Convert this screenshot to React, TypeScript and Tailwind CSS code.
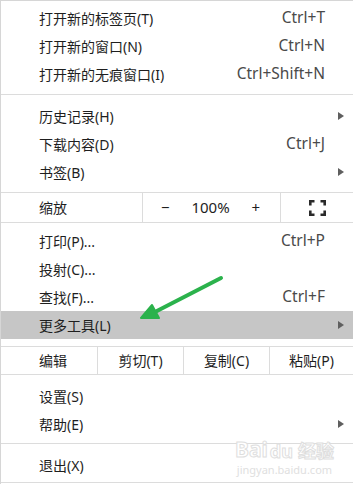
const font = "font-['Noto_Sans','Noto_Sans_CJK_SC',sans-serif]";

const Arrow = () => (
  <svg width="6" height="8" viewBox="0 0 6 8">
    <path d="M0 0 L6 4 L0 8 Z" fill="#5f5f5f" />
  </svg>
);

type ItemProps = {
  label: string;
  shortcut?: string;
  sub?: boolean;
  active?: boolean;
};

const Item = ({ label, shortcut, sub, active }: ItemProps) => (
  <div
    className={`flex items-center h-[28px] pl-[38px] text-[14px] text-[#1e1e1e] ${
      active ? "bg-[#c6c6c6]" : ""
    }`}
  >
    <span className="flex-1">{label}</span>
    {shortcut && <span className="text-[15.5px] text-[#4a4a4a]">{shortcut}</span>}
    <span className="w-[28px] flex items-center pl-[13px]">{sub && <Arrow />}</span>
  </div>
);

const Line = () => <div className="h-px bg-[#dcdcdc]" />;

const Fullscreen = () => (
  <svg width="17" height="16" viewBox="0 0 17 16" fill="none" stroke="#2a2a2a" strokeWidth="2.6">
    <path d="M1.3 5.5 V1.3 H5.5" />
    <path d="M11.5 1.3 H15.7 V5.5" />
    <path d="M15.7 10.5 V14.7 H11.5" />
    <path d="M5.5 14.7 H1.3 V10.5" />
  </svg>
);

export default function App() {
  return (
    <div className={`relative w-[353px] h-[484px] bg-white border-t border-l border-[#d6d6d6] overflow-hidden ${font}`}>
      <div className="pt-[3px] pb-[6px]">
        <Item label="打开新的标签页(T)" shortcut="Ctrl+T" />
        <Item label="打开新的窗口(N)" shortcut="Ctrl+N" />
        <Item label="打开新的无痕窗口(I)" shortcut="Ctrl+Shift+N" />
      </div>
      <Line />
      <div className="pt-[7px] pb-[6px]">
        <Item label="历史记录(H)" sub />
        <Item label="下载内容(D)" shortcut="Ctrl+J" />
        <Item label="书签(B)" sub />
      </div>
      <Line />
      <div className="flex h-[29px] text-[14px] text-[#1e1e1e]">
        <div className="w-[141px] flex items-center pl-[38px]">缩放</div>
        <div className="w-px bg-[#dcdcdc]" />
        <div className="w-[137px] flex items-center justify-between pl-[18px] pr-[20px] text-[15px]">
          <span>−</span>
          <span>100%</span>
          <span>+</span>
        </div>
        <div className="w-px bg-[#dcdcdc]" />
        <div className="flex-1 flex items-center justify-center">
          <Fullscreen />
        </div>
      </div>
      <Line />
      <div className="pt-[4px] pb-[7px]">
        <Item label="打印(P)..." shortcut="Ctrl+P" />
        <Item label="投射(C)..." />
        <Item label="查找(F)..." shortcut="Ctrl+F" />
        <Item label="更多工具(L)" sub active />
      </div>
      <Line />
      <div className="flex h-[27px] text-[14px] text-[#1e1e1e]">
        <div className="w-[96px] flex items-center pl-[38px]">编辑</div>
        <div className="w-px bg-[#dcdcdc]" />
        <div className="w-[85px] flex items-center justify-center">剪切(T)</div>
        <div className="w-px bg-[#dcdcdc]" />
        <div className="w-[85px] flex items-center justify-center">复制(C)</div>
        <div className="w-px bg-[#dcdcdc]" />
        <div className="flex-1 flex items-center justify-center">粘贴(P)</div>
      </div>
      <Line />
      <div className="pt-[7px] pb-[5px]">
        <Item label="设置(S)" />
        <Item label="帮助(E)" sub />
      </div>
      <Line />
      <div className="pt-[7px] pb-[3px]">
        <Item label="退出(X)" />
      </div>
      <Line />

      {/* green annotation arrow */}
      <svg className="absolute left-[130px] top-[268px]" width="100" height="56" viewBox="0 0 100 56">
        <path d="M90 9 L22 44" stroke="#2bb24c" strokeWidth="4" strokeLinecap="round" />
        <path d="M10 49 L21 36 L28 49 Z" fill="#2bb24c" stroke="#2bb24c" strokeWidth="2" strokeLinejoin="round" />
      </svg>

      {/* watermark */}
      <div className="absolute left-[234px] top-[438px] flex flex-col items-center leading-none">
        <div className="flex items-end gap-[2px] text-[21px] font-bold text-white [-webkit-text-stroke:1px_#dedede]">
          <span>Bai</span>
          <span className="text-[18px]">du</span>
          <span className="text-[18px] ml-[3px]">经验</span>
        </div>
        <div className="mt-[4px] text-[11px] text-[#e0e0e0]">jingyan.baidu.com</div>
      </div>
    </div>
  );
}
